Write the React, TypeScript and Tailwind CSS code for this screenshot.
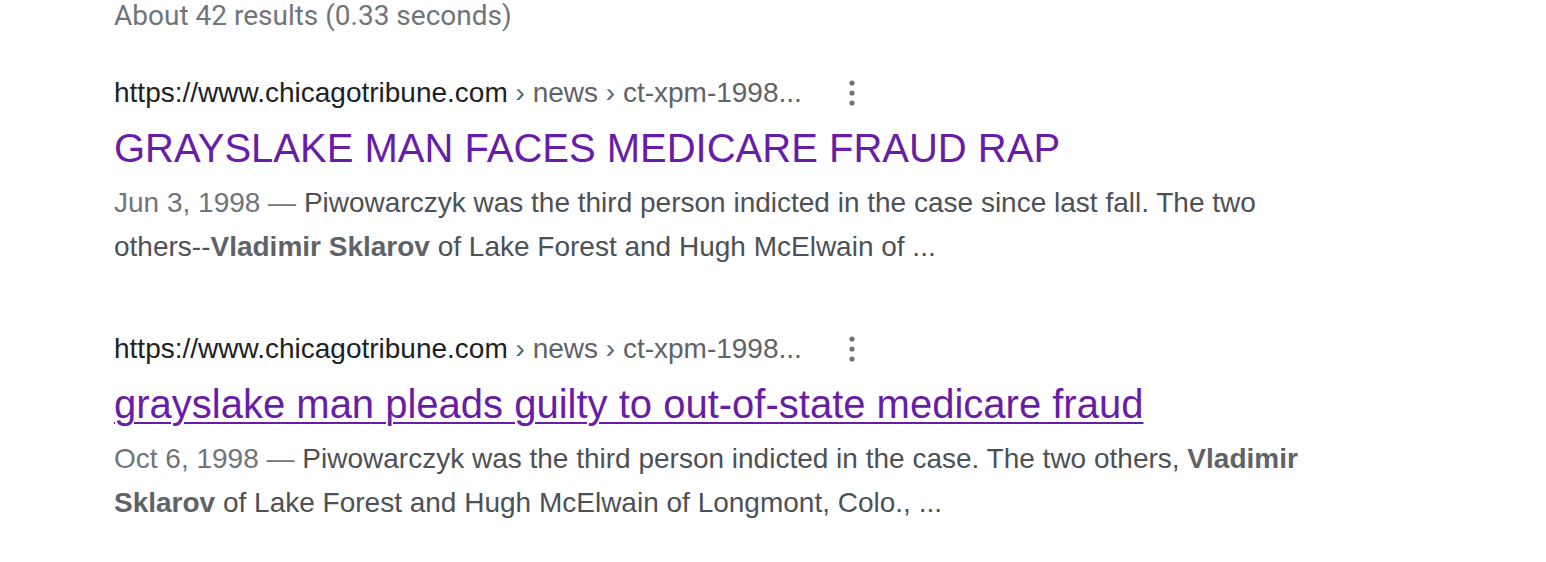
import React from "react";

const arial = { fontFamily: '"Liberation Sans", Arial, sans-serif' };

function Dots() {
  return (
    <svg width="20" height="30" viewBox="0 0 20 30" className="shrink-0">
      <circle cx="10" cy="5" r="2.6" fill="#70757a" />
      <circle cx="10" cy="15" r="2.6" fill="#70757a" />
      <circle cx="10" cy="25" r="2.6" fill="#70757a" />
    </svg>
  );
}

function Result({
  title,
  underline,
  date,
  line1,
  line2,
}: {
  title: string;
  underline?: boolean;
  date: string;
  line1: React.ReactNode;
  line2: React.ReactNode;
}) {
  return (
    <div className="flex flex-col">
      <div className="flex items-center h-[44px]">
        <div className="w-[728px] text-[28px] leading-[44px] whitespace-nowrap" style={arial}>
          <span className="text-[#202124]">https://www.chicagotribune.com</span>
          <span className="text-[#5f6368]"> › news › ct-xpm-1998...</span>
        </div>
        <Dots />
      </div>
      <div
        className={`h-[66px] text-[40px] leading-[66px] text-[#681da8] whitespace-nowrap ${underline ? "underline decoration-2 underline-offset-[4px]" : ""}`}
        style={arial}
      >
        {title}
      </div>
      <div className="text-[28px] leading-[44px] text-[#4d5156] whitespace-nowrap" style={arial}>
        <div>
          <span className="text-[#70757a]">{date} — </span>
          {line1}
        </div>
        <div>{line2}</div>
      </div>
    </div>
  );
}

export default function App() {
  return (
    <div className="w-[1546px] h-[562px] bg-white overflow-hidden pl-[114px]">
      <div
        className="text-[28px] leading-[32px] text-[#70757a]"
        style={{ fontFamily: 'Roboto, "Liberation Sans", Arial, sans-serif' }}
      >
        About 42 results (0.33 seconds)
      </div>
      <div className="flex flex-col gap-[58px] mt-[39px]">
        <Result
          title="GRAYSLAKE MAN FACES MEDICARE FRAUD RAP"
          date="Jun 3, 1998"
          line1={<>Piwowarczyk was the third person indicted in the case since last fall. The two</>}
          line2={
            <>
              others--<b className="text-[#5f6368]">Vladimir Sklarov</b> of Lake Forest and Hugh McElwain of ...
            </>
          }
        />
        <Result
          title="grayslake man pleads guilty to out-of-state medicare fraud"
          underline
          date="Oct 6, 1998"
          line1={
            <>
              Piwowarczyk was the third person indicted in the case. The two others,{" "}
              <b className="text-[#5f6368]">Vladimir</b>
            </>
          }
          line2={
            <>
              <b className="text-[#5f6368]">Sklarov</b> of Lake Forest and Hugh McElwain of Longmont, Colo., ...
            </>
          }
        />
      </div>
    </div>
  );
}
